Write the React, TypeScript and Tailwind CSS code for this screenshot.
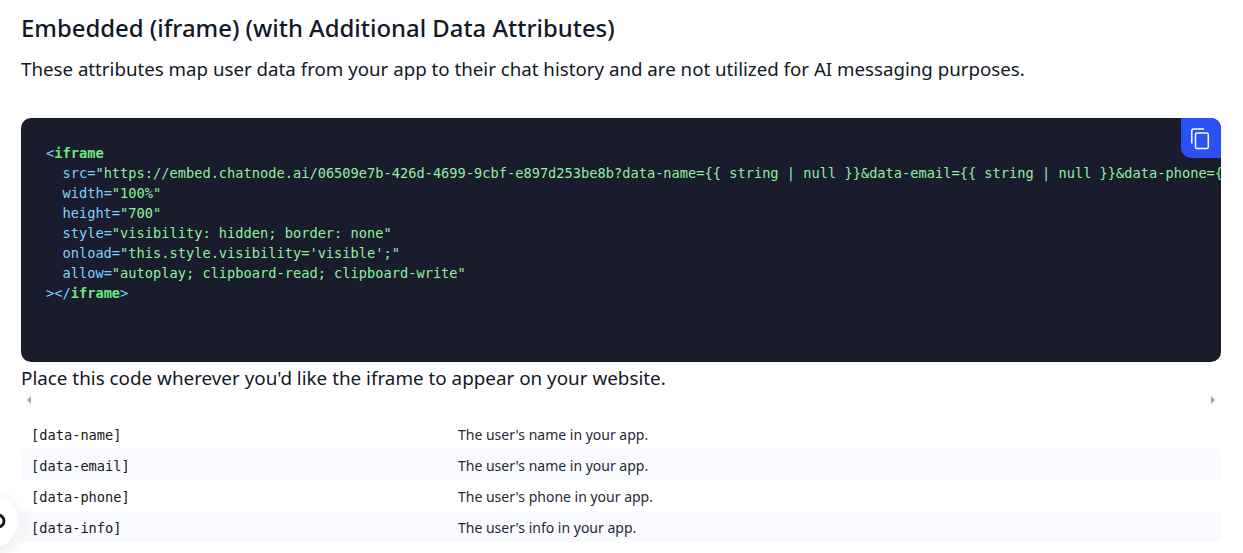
import React from 'react';

const rows = [
  { attr: '[data-name]', desc: "The user's name in your app." },
  { attr: '[data-email]', desc: "The user's name in your app." },
  { attr: '[data-phone]', desc: "The user's phone in your app." },
  { attr: '[data-info]', desc: "The user's info in your app." },
];

const attrLines = [
  ['width', '"100%"'],
  ['height', '"700"'],
  ['style', '"visibility: hidden; border: none"'],
  ['onload', '"this.style.visibility=\'visible\';"'],
  ['allow', '"autoplay; clipboard-read; clipboard-write"'],
];

const srcValue =
  '"https://embed.chatnode.ai/06509e7b-426d-4699-9cbf-e897d253be8b?data-name={{ string | null }}&data-email={{ string | null }}&data-phone={{ string | null }}&data-info={{ string | null }}"';

export default function App() {
  return (
    <div className="relative h-[553px] w-[1243px] overflow-hidden bg-white font-['Noto_Sans',sans-serif] text-[#111827]">
      <div className="pt-[11px] pr-[22px] pl-[21px]">
        <h2 className="text-[23.9px] leading-[33px] font-medium">
          Embedded (iframe) (with Additional Data Attributes)
        </h2>
        <p className="mt-[11px] text-[18.72px] leading-[27px] text-[#111827]">
          These attributes map user data from your app to their chat history and are not utilized for AI messaging purposes.
        </p>

        {/* Code block */}
        <div className="relative mt-[36px] h-[244px] overflow-hidden rounded-[10px] bg-[#181c2d]">
          <pre className="overflow-hidden pt-[25px] pl-[25px] font-['DejaVu_Sans_Mono',monospace] text-[13.68px] leading-[20px] text-[#8cf29a]">
            <span className="block">
              <span className="text-[#7dd3fc]">&lt;</span>
              <span className="font-bold text-[#6ee77f]">iframe</span>
            </span>
            <span className="block">
              {'  '}
              <span className="text-[#7dd3fc]">src=</span>
              {srcValue}
            </span>
            {attrLines.map(([name, value]) => (
              <span className="block" key={name}>
                {'  '}
                <span className="text-[#7dd3fc]">{name}=</span>
                {value}
              </span>
            ))}
            <span className="block">
              <span className="text-[#7dd3fc]">&gt;&lt;/</span>
              <span className="font-bold text-[#6ee77f]">iframe</span>
              <span className="text-[#7dd3fc]">&gt;</span>
            </span>
          </pre>
          {/* faint scrollbar thumb */}
          <div className="absolute top-[212px] left-[16px] h-[15px] w-[993px] bg-[#181b27]" />
          <button className="absolute top-0 right-0 flex h-[40px] w-[40px] items-center justify-center rounded-bl-[10px] bg-[#2b50f5]">
            <svg width="24" height="24" viewBox="0 0 24 24" fill="none" stroke="#fff" strokeWidth="1.5">
              <path d="M2.8 17.5V4.8C2.8 3.8 3.6 3 4.6 3H15" />
              <rect x="6.5" y="7" width="12.8" height="15.5" rx="1.5" />
            </svg>
          </button>
        </div>

        <p className="mt-[3px] text-[18.83px] leading-[27px] text-[#111827]">
          Place this code wherever you'd like the iframe to appear on your website.
        </p>

        {/* Horizontal scroll arrows */}
        <div className="flex h-[15px] items-center justify-between px-[6px]">
          <span className="h-0 w-0 border-y-[4px] border-r-[4px] border-y-transparent border-r-[#a3a3a3]" />
          <span className="h-0 w-0 border-y-[4px] border-l-[4px] border-y-transparent border-l-[#a3a3a3]" />
        </div>

        {/* Attribute table */}
        <div className="mt-[11px]">
          {rows.map((row, i) => (
            <div
              key={row.attr}
              className={`flex h-[31px] items-center pt-[2px] text-[#1f2937] ${i % 2 === 1 ? 'bg-[#f9fafe]' : ''}`}
            >
              <code className="w-[437px] pt-[2px] pl-[10px] font-['DejaVu_Sans_Mono',monospace] text-[13.68px] text-[#111827]">{row.attr}</code>
              <span className="text-[14px]">{row.desc}</span>
            </div>
          ))}
        </div>
      </div>

      {/* Chat widget peeking in from the left edge */}
      <div className="absolute top-[493px] left-[-38px] flex h-[56px] w-[56px] items-center justify-center rounded-full bg-white shadow-[0_4px_16px_rgba(0,0,0,0.1)]">
        <svg width="24" height="24" viewBox="0 0 24 24" fill="none" stroke="#1a1a1a" strokeWidth="3" className="ml-[16px]">
          <circle cx="12" cy="12" r="6" />
        </svg>
      </div>
    </div>
  );
}
